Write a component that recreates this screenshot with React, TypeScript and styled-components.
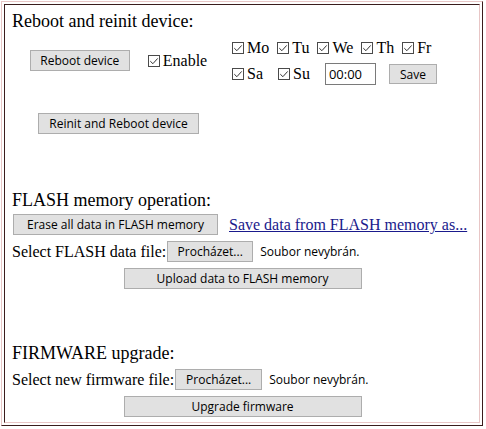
import styled, { createGlobalStyle } from "styled-components";

const GlobalStyle = createGlobalStyle`
  body {
    margin: 1px;
    background: #ffffff;
    font-family: "Liberation Serif", "Times New Roman", serif;
    font-size: 16px;
    font-weight: 400;
    color: #000000;
  }
`;

const DAYS_TOP = ["Mo", "Tu", "We", "Th", "Fr"];
const DAYS_BOTTOM = ["Sa", "Su"];

const CheckMark = () => (
  <CheckBox width="12" height="12" viewBox="0 0 12 12">
    <rect x="0.5" y="0.5" width="11" height="11" fill="#fff" stroke="#4a4a4a" />
    <path d="M2.3 6.2 L4.9 8.7 L9.7 3.4" fill="none" stroke="#333" strokeWidth="1" />
  </CheckBox>
);

const Day = ({ label }: { label: string }) => (
  <CheckLabel>
    <CheckMark />
    {label}
  </CheckLabel>
);

const App = () => {
  return (
    <>
      <GlobalStyle />
      <Frame>
        <Cell>
          <Heading>Reboot and reinit device:</Heading>
          <RebootGrid>
            <LeftCell>
              <Button $w={100}>Reboot device</Button>
              <CheckLabel>
                <CheckMark />
                Enable
              </CheckLabel>
            </LeftCell>
            <Days>
              <DayRow $gap={8} $h={20}>
                {DAYS_TOP.map((d) => (
                  <Day key={d} label={d} />
                ))}
              </DayRow>
              <DayRow $gap={15} $h={24}>
                {DAYS_BOTTOM.map((d) => (
                  <Day key={d} label={d} />
                ))}
                <TimeInput defaultValue="00:00" />
                <Button $w={48} $h={20}>Save</Button>
              </DayRow>
            </Days>
            <ReinitCell>
              <Button $w={161}>Reinit and Reboot device</Button>
            </ReinitCell>
          </RebootGrid>

          <Heading $top={56}>FLASH memory operation:</Heading>
          <Row $top={3}>
            <Button $w={205}>Erase all data in FLASH memory</Button>
            <SaveLink href="#">Save data from FLASH memory as...</SaveLink>
          </Row>
          <Row $top={6}>
            <span>Select FLASH data file:</span>
            <Button $w={86}>Procházet...</Button>
            <NoFile>Soubor nevybrán.</NoFile>
          </Row>
          <CenterRow $top={6}>
            <Button $w={238}>Upload data to FLASH memory</Button>
          </CenterRow>

          <Heading $top={54}>FIRMWARE upgrade:</Heading>
          <Row $top={5}>
            <span>Select new firmware file:</span>
            <Button $w={87}>Procházet...</Button>
            <NoFile>Soubor nevybrán.</NoFile>
          </Row>
          <CenterRow $top={6}>
            <Button $w={238}>Upgrade firmware</Button>
          </CenterRow>
        </Cell>
      </Frame>
    </>
  );
};

export default App;

const Frame = styled.div`
  box-sizing: border-box;
  width: 482px;
  height: 425px;
  padding: 2px;
  border: 1px solid;
  border-color: #e8c6c6 #3a1c1c #3a1c1c #e8c6c6;
`;

const Cell = styled.div`
  box-sizing: border-box;
  height: 100%;
  padding: 6px 7px 0 7px;
  border: 1px solid;
  border-color: #3a1c1c #e8c6c6 #e8c6c6 #3a1c1c;
`;

const Heading = styled.div<{ $top?: number }>`
  font-size: 18px;
  line-height: 21px;
  margin-top: ${(p) => p.$top ?? 0}px;
`;

const RebootGrid = styled.div`
  display: grid;
  grid-template-columns: 213px 1fr;
  column-gap: 7px;
  margin-top: 6px;
`;

const LeftCell = styled.div`
  display: flex;
  align-items: center;
  align-self: start;
  justify-content: center;
  gap: 18px;
  height: 21px;
  margin-top: 12px;
`;

const ReinitCell = styled.div`
  grid-column: 1;
  display: flex;
  justify-content: center;
  margin-top: 27px;
`;

const Days = styled.div`
  display: flex;
  flex-direction: column;
  gap: 4px;
`;

const DayRow = styled.div<{ $gap: number; $h: number }>`
  display: flex;
  align-items: center;
  gap: ${(p) => p.$gap}px;
  height: ${(p) => p.$h}px;
`;

const CheckLabel = styled.label`
  display: inline-block;
  white-space: nowrap;
  line-height: 18px;
`;

const CheckBox = styled.svg`
  display: inline-block;
  vertical-align: -1px;
  margin-right: 3px;
`;

const Button = styled.button<{ $w: number; $h?: number }>`
  box-sizing: border-box;
  width: ${(p) => p.$w}px;
  height: ${(p) => p.$h ?? 21}px;
  padding: 0;
  margin: 0;
  background: #e1e1e1;
  border: 1px solid #adadad;
  border-radius: 0;
  font-family: "Open Sans", "Noto Sans", sans-serif;
  font-size: 12px;
  font-weight: 400;
  color: #000;
  flex-shrink: 0;
`;

const TimeInput = styled.input`
  box-sizing: border-box;
  width: 51px;
  height: 22px;
  margin: 0 -2px 0 0;
  padding: 0 3px;
  border: 1px solid #7a7a7a;
  font-family: "Open Sans", "Noto Sans", sans-serif;
  font-size: 13px;
  color: #000;
`;

const Row = styled.div<{ $top: number }>`
  display: flex;
  align-items: center;
  margin-top: ${(p) => p.$top}px;
  line-height: 19px;

  & > button {
    margin-left: 1px;
  }
`;

const CenterRow = styled.div<{ $top: number }>`
  display: flex;
  justify-content: center;
  margin-top: ${(p) => p.$top}px;
  padding-left: 1px;
`;

const SaveLink = styled.a`
  margin-left: 11px;
  color: #1a1a8c;
  text-decoration: underline;
`;

const NoFile = styled.span`
  margin-left: 7px;
  font-family: "Open Sans", "Noto Sans", sans-serif;
  font-size: 12px;
`;
